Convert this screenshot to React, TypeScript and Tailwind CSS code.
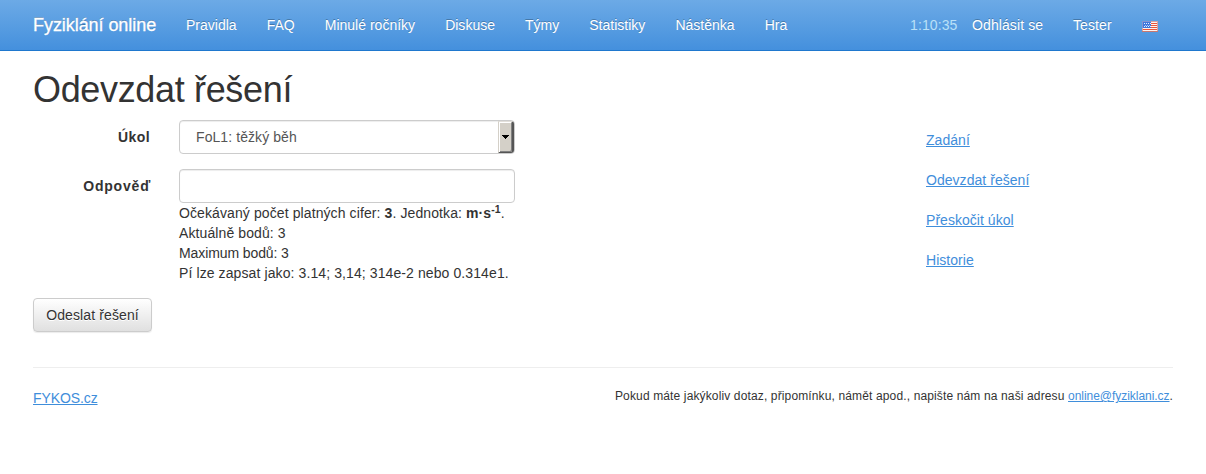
const nav = ['Pravidla', 'FAQ', 'Minulé ročníky', 'Diskuse', 'Týmy', 'Statistiky', 'Nástěnka', 'Hra'];
const links = ['Zadání', 'Odevzdat řešení', 'Přeskočit úkol', 'Historie'];

function Flag() {
  return (
    <svg width="16" height="11" viewBox="0 0 16 11" shapeRendering="crispEdges" className="mt-[21px]">
      <rect width="16" height="11" fill="#d9a0a0" />
      <rect x="1" y="1" width="14" height="9" fill="#fff3ee" />
      <path d="M9 2.5h6M9 4.5h6M1 8.5h14" stroke="#e8573f" />
      <path d="M9 6.5h6" stroke="#e8573f" />
      <path d="M0 10.5h16" stroke="#c87870" />
      <rect width="9" height="7" fill="#3f77dd" />
      <path d="M0 .5h9M.5 0v7" stroke="#8793d0" />
      <path d="M2 2.5h7M2 5.5h7" stroke="#e4edff" strokeDasharray="1 1" />
      <path d="M3 4h6" stroke="#a9c4f5" strokeDasharray="1 1" />
    </svg>
  );
}

export default function App() {
  return (
    <div className="h-[474px] bg-white font-['Liberation_Sans',Arial,sans-serif] text-sm text-[#333]">
      <nav className="flex h-[51px] border-b border-[#1f78ce] bg-linear-to-b from-[#6caae6] to-[#4490dd] pl-[33px] text-white [text-shadow:0_-1px_0_rgba(0,0,0,0.25)]">
        <span className="w-[138px] whitespace-nowrap pt-[15px] text-lg leading-5 tracking-[-0.06px] [-webkit-text-stroke:0.3px_white]">Fyziklání online</span>
        {nav.map((t) => (
          <a key={t} className="whitespace-nowrap px-[15px] pt-[15px] leading-5 tracking-[0.01px]">{t}</a>
        ))}
        <div className="ml-auto flex pr-12 leading-5">
          <span className="w-[62px] pt-[15px] text-[#b9e0f8] tracking-[0.1px] [text-shadow:none]">1:10:35</span>
          <a className="w-[101px] pt-[15px] tracking-[0.1px]">Odhlásit se</a>
          <a className="w-[69px] pt-[15px] tracking-[0.1px]">Tester</a>
          <Flag />
        </div>
      </nav>

      <main className="px-[33px]">
        <h1 className="h-[69px] pt-[19px] text-4xl leading-10 tracking-[-0.34px]">Odevzdat řešení</h1>
        <div className="flex h-[212px]">
          <form className="w-[893px]">
            <div className="flex h-[49px]">
              <label className="w-[117px] pt-[7px] text-right font-bold leading-5 tracking-[0.4px]">Úkol</label>
              <div className="ml-[29px] flex h-[34px] w-[336px] rounded border border-[#ccc] pl-4 text-[#555] shadow-[inset_0_1px_1px_rgba(0,0,0,0.075)]">
                <span className="flex-1 pt-1.5 leading-5 tracking-[0.08px]">FoL1: těžký běh</span>
                <span className="flex h-8 w-4 items-center justify-center rounded-r-[3px] border-t border-r-2 border-b border-l border-t-[#e2dfda] border-r-[#555] border-b-[#555] border-l-[#d4d0c8] bg-[#d4d0c8] shadow-[inset_1px_1px_0_white,inset_-1px_-1px_0_#808080]">
                  <svg width="7" height="4" viewBox="0 0 7 4" shapeRendering="crispEdges"><path d="M0 0h7v1H6v1H5v1H4v1H3V3H2V2H1V1H0z" fill="#000" /></svg>
                </span>
              </div>
            </div>
            <div className="flex">
              <label className="w-[118px] pt-[7px] text-right font-bold leading-5 tracking-[0.8px]">Odpověď</label>
              <div className="ml-7 w-[336px]">
                <div className="h-[34px] rounded border border-[#ccc] shadow-[inset_0_1px_1px_rgba(0,0,0,0.075)]" />
                <div className="whitespace-nowrap leading-5 tracking-[0.1px]">
                  <p className="h-5">Očekávaný počet platných cifer: <b>3</b>. Jednotka: <b>m·s<sup>-1</sup></b>.</p>
                  <p>Aktuálně bodů: 3</p>
                  <p className="tracking-[-0.1px]">Maximum bodů: 3</p>
                  <p>Pí lze zapsat jako: 3.14; 3,14; 314e-2 nebo 0.314e1.</p>
                </div>
              </div>
            </div>
            <button type="button" className="mt-[15px] h-[34px] w-[119px] whitespace-nowrap rounded border border-[#ccc] bg-linear-to-b from-white to-[#e0e0e0] text-sm leading-5 tracking-[0.12px] shadow-[0_1px_1px_rgba(0,0,0,0.08)] [text-shadow:0_1px_0_white]">Odeslat řešení</button>
          </form>
          <aside className="flex flex-col gap-5 pt-2.5 leading-5 tracking-[0.04px]">
            {links.map((t) => <a key={t} className="text-[#3f8edb] underline">{t}</a>)}
          </aside>
        </div>
        <footer className="mt-[35px] flex w-[1140px] justify-between border-t border-[#eee] pt-5">
          <a className="leading-5 tracking-[-0.1px] text-[#3f8edb] underline">FYKOS.cz</a>
          <p className="whitespace-nowrap text-xs leading-4 tracking-[0.135px]">
            Pokud máte jakýkoliv dotaz, připomínku, námět apod., napište nám na naši adresu <a className="tracking-[-0.04px] text-[#3f8edb] underline">online@fyziklani.cz</a>.
          </p>
        </footer>
      </main>
    </div>
  );
}
